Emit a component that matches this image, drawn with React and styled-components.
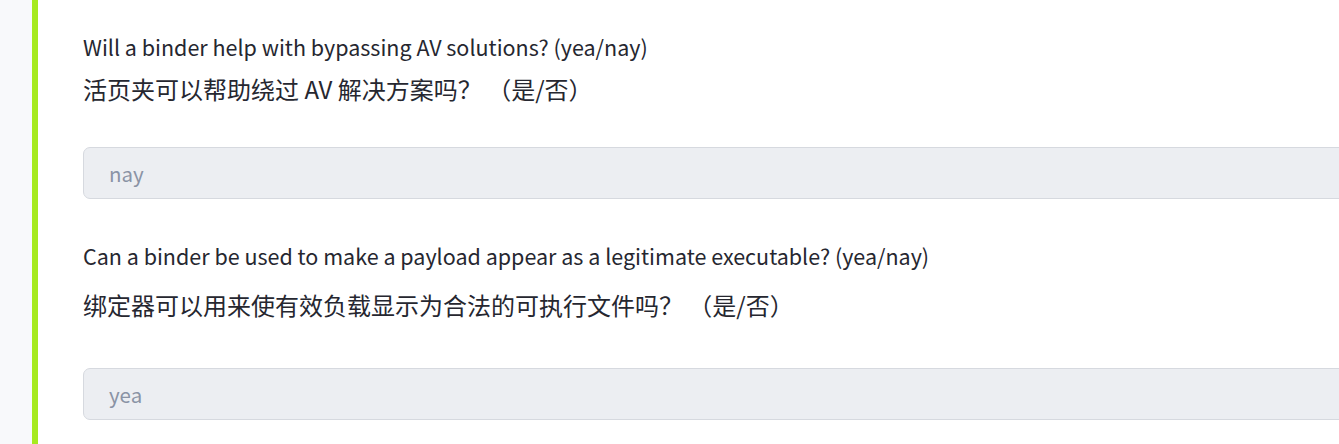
import React from "react";
import styled, { createGlobalStyle } from "styled-components";

const Global = createGlobalStyle`
  html, body { margin: 0; padding: 0; background: #ffffff; overflow: hidden; }
  body { font-family: "Noto Sans CJK SC", "Noto Sans", sans-serif; color: #262730; }
`;

const Page = styled.div`
  display: flex;
  width: 1339px;
  height: 444px;
  overflow: hidden;
`;

const Gutter = styled.div`
  width: 32px;
  flex: 0 0 32px;
  background: #f8f9fb;
`;

const Accent = styled.div`
  width: 6px;
  flex: 0 0 6px;
  background: #a6ea1f;
`;

const Content = styled.div`
  flex: 1;
  padding: 33px 0 0 45px;
  margin-right: -40px;
  display: flex;
  flex-direction: column;
`;

const Question = styled.div`
  display: flex;
  flex-direction: column;
  margin-bottom: ${(p) => p.$after}px;
`;

const English = styled.p`
  margin: 0;
  font-size: 21.5px;
  line-height: 28px;
  color: #262730;
`;

const Chinese = styled.p`
  margin: ${(p) => p.$top}px 0 0;
  font-size: 24px;
  line-height: 34px;
  color: #262730;
`;

const Answer = styled.div`
  margin-top: ${(p) => p.$top}px;
  height: 52px;
  box-sizing: border-box;
  border: 1px solid #d6d9df;
  border-radius: 7px;
  background: #eceef2;
  display: flex;
  align-items: center;
  padding-left: 25px;
  font-size: 20.5px;
  color: #8a93a5;
`;

const items = [
  {
    en: "Will a binder help with bypassing AV solutions? (yea/nay)",
    zh: "活页夹可以帮助绕过 AV 解决方案吗？ （是/否）",
    answer: "nay",
    zhTop: 11,
    ansTop: 41,
    after: 43,
  },
  {
    en: "Can a binder be used to make a payload appear as a legitimate executable? (yea/nay)",
    zh: "绑定器可以用来使有效负载显示为合法的可执行文件吗？ （是/否）",
    answer: "yea",
    zhTop: 18,
    ansTop: 46,
    after: 0,
  },
];

export default function App() {
  return (
    <>
      <Global />
      <Page>
        <Gutter />
        <Accent />
        <Content>
          {items.map((it, i) => (
            <Question key={i} $after={it.after}>
              <English>{it.en}</English>
              <Chinese $top={it.zhTop}>{it.zh}</Chinese>
              <Answer $top={it.ansTop}>{it.answer}</Answer>
            </Question>
          ))}
        </Content>
      </Page>
    </>
  );
}
